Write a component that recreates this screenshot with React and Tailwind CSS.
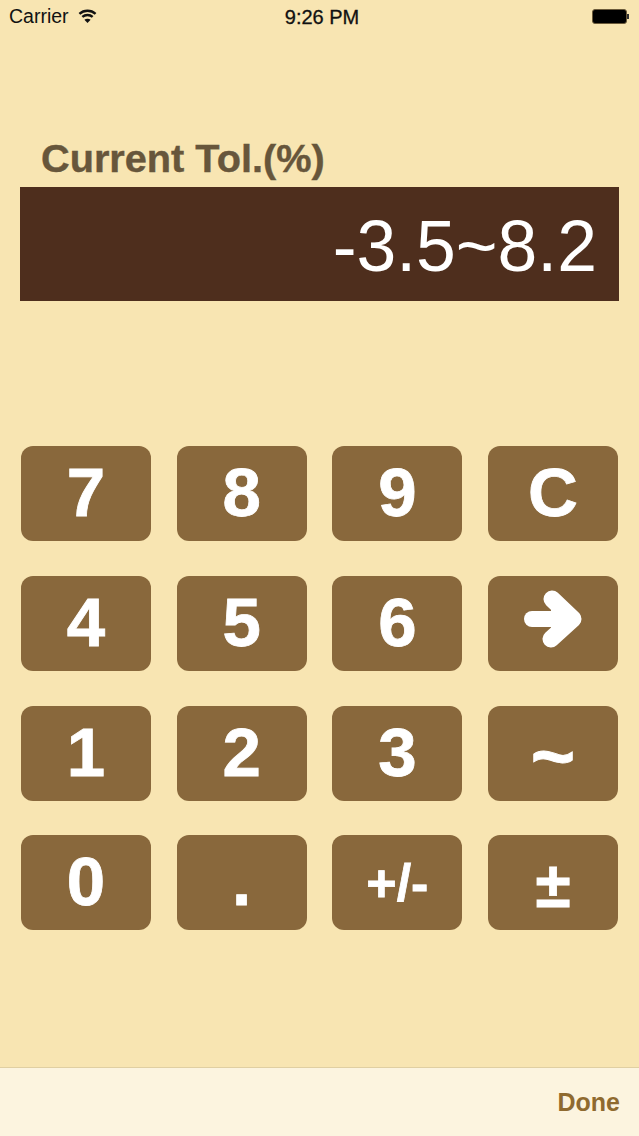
import React from 'react';

const font = { sans: 'font-["Liberation_Sans",Arial,sans-serif]' };

const keys = ['7', '8', '9', 'C', '4', '5', '6', 'arrow', '1', '2', '3', '~', '0', '.', '+/-', '±'];

const keySize = {
  '~': 'text-[76px] pt-[6px]',
  '+/-': 'text-[52px]',
  '±': 'text-[64px] pt-[4px]',
};

const WifiIcon = () => (
  <svg width="19" height="14" viewBox="0 0 17 13" fill="none" stroke="#111" strokeWidth="2.2" className="-mt-[2px]">
    <path d="M1 4.6C5.2 .7 11.8 .7 16 4.6" />
    <path d="M3.7 7.4C6.4 5 10.6 5 13.3 7.4" />
    <path d="M8.5 13 5.6 10C7.2 8.6 9.8 8.6 11.4 10Z" fill="#111" stroke="none" />
  </svg>
);

const ArrowIcon = () => (
  <svg width="60" height="60" viewBox="0 0 60 60" fill="none" stroke="white" strokeLinecap="round" strokeLinejoin="round">
    <path d="M9 30H50" strokeWidth="16" />
    <path d="M29 10 50 30 28 50" strokeWidth="17" />
    <path d="M32 19 45 30 32 41Z" fill="white" strokeWidth="8" />
  </svg>
);

const Key = ({ value }) => (
  <button className={`h-[95px] rounded-xl bg-[#89683c] flex items-center justify-center text-white font-bold leading-none [-webkit-text-stroke:0.8px_white] ${keySize[value] || 'text-[69px] pb-[2px]'}`}>
    {value === 'arrow' ? <span className="-mt-[6px] flex"><ArrowIcon /></span> : value}
  </button>
);

export default function App() {
  return (
    <div className={`h-[1136px] w-[639px] flex flex-col overflow-hidden bg-[#f8e5b2] ${font.sans}`}>
      {/* status bar */}
      <div className="h-[33px] px-[9px] flex items-center justify-between text-[19.5px] text-[#111]">
        <div className="flex-1 flex items-center gap-[9px]">
          <span>Carrier</span>
          <WifiIcon />
        </div>
        <span className="ml-[6px] text-[20px] [-webkit-text-stroke:0.3px_#111]">9:26 PM</span>
        <div className="flex-1 flex justify-end pr-[1px]">
          <div className="flex items-center">
            <div className="w-[35px] h-[15px] rounded-[3px] bg-black border border-[#6b5a3a]" />
            <div className="w-[2px] h-[5px] bg-[#333]" />
          </div>
        </div>
      </div>

      <h1 className="mt-[100px] mb-[2px] pl-[41px] h-[52px] flex items-center text-[39.7px] font-bold text-[#67563b] leading-none [-webkit-text-stroke:0.4px_#67563b]">
        Current Tol.(%)
      </h1>

      <div className="mx-[20px] h-[114px] bg-[#4e2e1d] flex items-center justify-end pr-[22px] pt-[5px] text-[71.5px] text-white leading-none">
        -3.5~8.2
      </div>

      <div className="mt-[145.3px] mx-[21px] grid grid-cols-4 gap-x-[25.7px] gap-y-[34.7px]">
        {keys.map((k) => (
          <Key key={k} value={k} />
        ))}
      </div>

      {/* toolbar */}
      <div className="mt-auto h-[69px] border-t border-[#e0cfa2] bg-[#fcf4df] flex items-center justify-end pr-[19px] pt-[2px] text-[25px] font-bold text-[#8f6a2f]">
        Done
      </div>
    </div>
  );
}
